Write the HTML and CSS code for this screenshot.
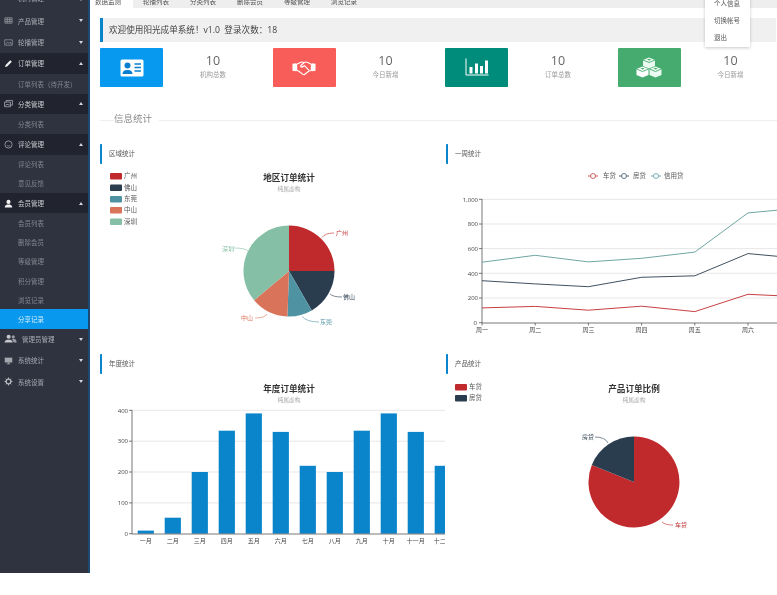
FILE: index.html
```
<!DOCTYPE html>
<html lang="zh-CN">
<head>
<meta charset="utf-8">
<title>阳光成单系统</title>
<link rel="stylesheet" href="styles.css">
</head>
<body>
<div class="app">
  <aside class="side">
    <div class="nav nav-cut"><span class="nav-label">机构管理</span><i class="caret"></i></div>
    <div class="nav"><svg class="ico" viewBox="0 0 10 10"><path d="M1 2h8v6H1zM1 4h8M1 6h8M3.6 2v6M6.4 2v6" fill="none" stroke="#9a9da6" stroke-width=".8"/></svg><span class="nav-label">产品管理</span><i class="caret"></i></div>
    <div class="nav"><svg class="ico" viewBox="0 0 10 10"><path d="M.8 2h8.4v6H.8zM2 7l2-2.4 1.6 1.5L7 4.6 8.2 7" fill="none" stroke="#9a9da6" stroke-width=".8"/></svg><span class="nav-label">轮播管理</span><i class="caret"></i></div>
    <div class="nav open"><svg class="ico" viewBox="0 0 10 10"><path d="M1.2 9l.6-2.4L7 1.4l1.7 1.7L3.5 8.3z" fill="#f2f2f2"/></svg><span class="nav-label">订单管理</span><i class="caret up"></i></div>
    <div class="sub">订单列表（待开发）</div>
    <div class="nav open"><svg class="ico" viewBox="0 0 10 10"><path d="M.6 3.4h6.6v5.2H.6zM2.4 3.2V1.6h7v5.2H7.4M1.5 7.6l1.8-2 1.4 1.2 1-.9 1 1.4" fill="none" stroke="#b5b7be" stroke-width=".8"/></svg><span class="nav-label">分类管理</span><i class="caret up"></i></div>
    <div class="sub">分类列表</div>
    <div class="nav open tall"><svg class="ico" viewBox="0 0 10 10"><circle cx="5" cy="5" r="4" fill="none" stroke="#b5b7be" stroke-width=".8"/><path d="M3.2 6.1c1.2.8 2.4.8 3.6 0" fill="none" stroke="#b5b7be" stroke-width=".7"/></svg><span class="nav-label">评论管理</span><i class="caret up"></i></div>
    <div class="sub sub-s">评论列表</div>
    <div class="sub sub-s">意见反馈</div>
    <div class="nav open tall"><svg class="ico" viewBox="0 0 10 10"><circle cx="5" cy="3.2" r="2.3" fill="#f0f0f0"/><path d="M.8 9.4c.2-2.4 2-2.6 3-3.2h2.4c1 .6 2.8.8 3 3.2z" fill="#f0f0f0"/></svg><span class="nav-label">会员管理</span><i class="caret up"></i></div>
    <div class="sub sub-s">会员列表</div>
    <div class="sub sub-s">删除会员</div>
    <div class="sub sub-s">等级管理</div>
    <div class="sub sub-s">积分管理</div>
    <div class="sub sub-s">浏览记录</div>
    <div class="sub sub-s active">分享记录</div>
    <div class="nav tall"><svg class="ico ico-w" viewBox="0 0 14 10"><circle cx="5" cy="2.8" r="2.2" fill="#c4c6cc"/><path d="M.6 9c.2-2.4 1.8-2.4 2.8-3h3.2c1 .6 2.600.6 2.800 3z" fill="#c4c6cc"/><circle cx="10" cy="3" r="1.7" fill="#9a9da6"/><path d="M8.6 5.4h2.8c1 .5 2 .6 2.2 3.6h-3.2z" fill="#9a9da6"/></svg><span class="nav-label">管理员管理</span><i class="caret"></i></div>
    <div class="nav"><svg class="ico" viewBox="0 0 10 10"><path d="M.8 1.8h8.4v5.4H.8z" fill="#a4a6ae"/><path d="M4 7.2h2v1.4h1.2v.6H2.8v-.6H4z" fill="#a4a6ae"/></svg><span class="nav-label">系统统计</span><i class="caret"></i></div>
    <div class="nav nav-last"><svg class="ico" viewBox="0 0 10 10"><circle cx="5" cy="5" r="2.6" fill="none" stroke="#b5b7be" stroke-width="1.5"/><path d="M5 .6v1.6M5 7.8v1.6M.6 5h1.6M7.8 5h1.6M1.9 1.900L3 3M7 7l1.100 1.100M1.900 8.100L3 7M7 3l1.100-1.100" stroke="#b5b7be" stroke-width="1.100"/></svg><span class="nav-label">系统设置</span><i class="caret"></i></div>
  </aside>

  <main class="main">
    <div class="tabs">
      <span class="tab tab-on">数据监测</span>
      <span class="tab">轮播列表</span>
      <span class="tab">分类列表</span>
      <span class="tab">删除会员</span>
      <span class="tab">等级管理</span>
      <span class="tab">浏览记录</span>
    </div>

    <div class="menu">
      <div class="menu-item">个人信息</div>
      <div class="menu-item">切换帐号</div>
      <div class="menu-item">退出</div>
    </div>

    <div class="content">
      <div class="welcome">欢迎使用阳光成单系统！v1.0 &nbsp;登录次数：18</div>

      <div class="cards">
        <div class="card">
          <div class="card-ico c-blue">
            <svg viewBox="0 0 24 18" class="glyph"><rect x=".5" y=".5" width="23" height="17" rx="1.500" fill="#fff"/><circle cx="7.500" cy="6.500" r="3" fill="#0a7fd0"/><path d="M2.500 15c.2-3.400 2.600-4 5-4s4.800.6 5 4z" fill="#0a7fd0"/><path d="M14.500 5h6.500M14.500 8.500h6.500M14.500 12h6.500" stroke="#0a7fd0" stroke-width="1.300"/></svg>
          </div>
          <div class="card-body"><div class="num">10</div><div class="lab">机构总数</div></div>
        </div>
        <div class="card">
          <div class="card-ico c-red">
            <svg viewBox="0 0 26 18" class="glyph"><path d="M.5 4.500l4-.6v8.600l-4-.6zM25.500 4.500l-4-.6v8.600l4-.6z" fill="#fff"/><path d="M5 5l4-2c1.500-.8 2.800-.6 4 .2 1.200-.8 2.500-1 4-.2l4 2v6.500l-3 1-4.500 3.500c-.6.400-1.200.300-1.700-.1L7.500 12.500 5 11.500z" fill="none" stroke="#fff" stroke-width="1.300"/><path d="M13 3.200L9.500 6.500c-.6 1 .6 2 1.800 1.300l2.200-1.300 5 5" fill="none" stroke="#fff" stroke-width="1.300"/></svg>
          </div>
          <div class="card-body"><div class="num">10</div><div class="lab">今日新增</div></div>
        </div>
        <div class="card">
          <div class="card-ico c-teal">
            <svg viewBox="0 0 24 18" class="glyph glyph-up"><path d="M1 .5V17h22.500" fill="none" stroke="#fff" stroke-width="1"/><path d="M4.500 9h3v6.500h-3zM10 5.500h3v10h-3zM15 8h3v7.500h-3zM20 2.500h3v13h-3z" fill="#fff"/></svg>
          </div>
          <div class="card-body"><div class="num">10</div><div class="lab">订单总数</div></div>
        </div>
        <div class="card">
          <div class="card-ico c-green">
            <svg viewBox="0 0 26 21" class="glyph glyph-cube"><path d="M13 .5l6 2.500v6l-6 2.500-6-2.500V3z" fill="#eafaf0"/><path d="M6.500 9.500l6 2.500v6l-6 2.500-6-2.500v-6z" fill="#fff"/><path d="M19.500 9.500l6 2.500v6l-6 2.500-6-2.500v-6z" fill="#eafaf0"/><path d="M7 3l6 2.500L19 3M.5 12l6 2.500 6-2.500M13.500 12l6 2.500 6-2.500" fill="none" stroke="#45ab6f" stroke-width=".9"/><path d="M11 2.600l2-.8 2.200.9-2 .8zM4.500 11.600l2-.8 2.200.9-2 .8zM17.500 11.600l2-.8 2.200.9-2 .8z" fill="#45ab6f"/></svg>
          </div>
          <div class="card-body"><div class="num">10</div><div class="lab">今日新增</div></div>
        </div>
      </div>

      <div class="legend-head"><span class="rule rule-s"></span><span class="legend-text">信息统计</span><span class="rule rule-g"></span></div>

      <div class="panels">
        <section class="panel">
          <h3 class="panel-title">区域统计</h3>
          <svg class="chart" viewBox="100 164 346 190" width="346" height="190">
            <g class="lg">
              <rect x="110" y="173" width="12" height="6.500" rx="1" fill="#c12a2c"/><text x="124" y="178.300">广州</text>
              <rect x="110" y="184.500" width="12" height="6.500" rx="1" fill="#2a3d4e"/><text x="124" y="189.800">佛山</text>
              <rect x="110" y="196" width="12" height="6.500" rx="1" fill="#4f93a3"/><text x="124" y="201.300">东莞</text>
              <rect x="110" y="207" width="12" height="6.500" rx="1" fill="#d9745a"/><text x="124" y="212.300">中山</text>
              <rect x="110" y="218.500" width="12" height="6.500" rx="1" fill="#85bfa5"/><text x="124" y="223.800">深圳</text>
            </g>
            <text class="ct" x="289" y="181">地区订单统计</text>
            <text class="cs" x="289" y="191">纯属虚构</text>
            <path d="M289 271V225.500A45.500 45.500 0 0 1 334.500 271z" fill="#c12a2c"/>
            <path d="M289 271H334.500A45.500 45.500 0 0 1 311.750 310.400z" fill="#2a3d4e"/>
            <path d="M289 271L311.750 310.400A45.500 45.500 0 0 1 287.410 316.470z" fill="#4f93a3"/>
            <path d="M289 271L287.410 316.470A45.500 45.500 0 0 1 254.150 300.250z" fill="#d9745a"/>
            <path d="M289 271L254.150 300.250A45.500 45.500 0 0 1 289 225.500z" fill="#85bfa5"/>
            <g class="lead">
              <path d="M322 237.500q3-4.500 12-4.500" stroke="#c12a2c"/><text x="336" y="235" fill="#c12a2c">广州</text>
              <path d="M330 294q3 3 12 3" stroke="#2a3d4e"/><text x="343" y="299.300" fill="#2a3d4e">佛山</text>
              <path d="M302 316.500q5 5.500 17 5.500" stroke="#4f93a3"/><text x="320" y="324.300" fill="#4f93a3">东莞</text>
              <path d="M267 314q-2 4-12 4" stroke="#d9745a"/><text x="241" y="320" fill="#d9745a">中山</text>
              <path d="M248 251q-3-3-14-3" stroke="#85bfa5"/><text x="222" y="250.500" fill="#85bfa5">深圳</text>
            </g>
          </svg>
        </section>

        <section class="panel">
          <h3 class="panel-title">一周统计</h3>
          <svg class="chart" viewBox="446 164 346 190" width="346" height="190">
            <g class="lg">
              <path d="M588 176h10" stroke="#c12a2c" stroke-width=".8"/><circle cx="593" cy="176" r="2.500" fill="#fff" stroke="#c12a2c" stroke-width=".7"/><text x="603" y="178.200">车贷</text>
              <path d="M619 176h10" stroke="#2a3d4e" stroke-width=".8"/><circle cx="624" cy="176" r="2.500" fill="#fff" stroke="#2a3d4e" stroke-width=".7"/><text x="633" y="178.200">房贷</text>
              <path d="M651 176h10" stroke="#4f93a3" stroke-width=".8"/><circle cx="656" cy="176" r="2.500" fill="#fff" stroke="#4f93a3" stroke-width=".7"/><text x="664" y="178.200">信用贷</text>
            </g>
            <path class="grid" d="M482 199.300H810M482 224H810M482 248.600H810M482 273.300H810M482 298H810"/>
            <path class="axis" d="M482 199v124H810M482 199.300h-3M482 224h-3M482 248.600h-3M482 273.300h-3M482 298h-3M482 322.700h-3M482 323v2.500M535.200 323v2.500M588.400 323v2.500M641.600 323v2.500M694.800 323v2.500M748 323v2.500"/>
            <g class="yl">
              <text x="478" y="201.500">1,000</text><text x="478" y="226.200">800</text><text x="478" y="250.800">600</text><text x="478" y="275.500">400</text><text x="478" y="300.200">200</text><text x="477" y="324.500">0</text>
            </g>
            <g class="xl">
              <text x="482" y="332">周一</text><text x="535.200" y="332">周二</text><text x="588.400" y="332">周三</text><text x="641.600" y="332">周四</text><text x="694.800" y="332">周五</text><text x="748" y="332">周六</text>
            </g>
            <polyline class="ln" stroke="#c12a2c" points="482,307.900 535.200,306.400 588.400,310.200 641.600,306.200 694.800,311.600 748,294.300 801.200,296.800"/>
            <polyline class="ln" stroke="#2a3d4e" points="482,280.700 535.200,283.900 588.400,286.700 641.600,277.300 694.800,275.800 748,253.600 801.200,258.500"/>
            <polyline class="ln" stroke="#5f9c96" points="482,262.200 535.200,255.300 588.400,261.900 641.600,258.300 694.800,252.100 748,212.900 801.200,208"/>
          </svg>
        </section>

        <section class="panel">
          <h3 class="panel-title">年度统计</h3>
          <svg class="chart" viewBox="100 374 345 190" width="345" height="190">
            <text class="ct" x="289" y="392">年度订单统计</text>
            <text class="cs" x="289" y="402">纯属虚构</text>
            <path class="grid" d="M132 410.300H445M132 441.200H445M132 472H445M132 502.900H445"/>
            <g fill="#0a85cc">
              <rect x="137.700" y="530.600" width="16.200" height="3.100"/>
              <rect x="164.700" y="517.700" width="16.200" height="16"/>
              <rect x="191.700" y="472" width="16.200" height="61.700"/>
              <rect x="218.700" y="430.700" width="16.200" height="103"/>
              <rect x="245.700" y="413.400" width="16.200" height="120.300"/>
              <rect x="272.700" y="431.900" width="16.200" height="101.800"/>
              <rect x="299.700" y="465.800" width="16.200" height="67.900"/>
              <rect x="326.700" y="472" width="16.200" height="61.700"/>
              <rect x="353.700" y="430.700" width="16.200" height="103"/>
              <rect x="380.700" y="413.400" width="16.200" height="120.300"/>
              <rect x="407.700" y="431.900" width="16.200" height="101.800"/>
              <rect x="434.700" y="465.800" width="16.200" height="67.900"/>
            </g>
            <path class="axis" d="M132 410v124H445M132 410.300h-3M132 441.200h-3M132 472h-3M132 502.900h-3M132 533.700h-3"/>
            <g class="yl">
              <text x="128" y="412.500">400</text><text x="128" y="443.400">300</text><text x="128" y="474.200">200</text><text x="128" y="505.100">100</text><text x="128" y="536">0</text>
            </g>
            <g class="xl">
              <text x="145.800" y="542.500">一月</text><text x="172.800" y="542.500">二月</text><text x="199.800" y="542.500">三月</text><text x="226.800" y="542.500">四月</text><text x="253.800" y="542.500">五月</text><text x="280.800" y="542.500">六月</text><text x="307.800" y="542.500">七月</text><text x="334.800" y="542.500">八月</text><text x="361.800" y="542.500">九月</text><text x="388.800" y="542.500">十月</text><text x="415.800" y="542.500">十一月</text><text x="442.800" y="542.500">十二月</text>
            </g>
          </svg>
        </section>

        <section class="panel">
          <h3 class="panel-title">产品统计</h3>
          <svg class="chart" viewBox="446 374 346 190" width="346" height="190">
            <g class="lg">
              <rect x="455" y="384" width="12" height="6.500" rx="1" fill="#c12a2c"/><text x="469" y="389.300">车贷</text>
              <rect x="455" y="395" width="12" height="6.500" rx="1" fill="#2a3d4e"/><text x="469" y="400.300">房贷</text>
            </g>
            <text class="ct" x="634" y="392">产品订单比例</text>
            <text class="cs" x="634" y="402">纯属虚构</text>
            <path d="M634 482V436.500A45.500 45.500 0 1 1 591.800 464.900z" fill="#c12a2c"/>
            <path d="M634 482L591.800 464.900A45.500 45.500 0 0 1 634 436.500z" fill="#2a3d4e"/>
            <g class="lead">
              <path d="M608 443q-3-6-13-6" stroke="#2a3d4e"/><text x="582" y="439.200" fill="#2a3d4e">房贷</text>
              <path d="M662 522q3 3 11 3" stroke="#c12a2c"/><text x="675" y="527.200" fill="#c12a2c">车贷</text>
            </g>
          </svg>
        </section>
      </div>
    </div>
  </main>
</div>
</body>
</html>
```

FILE: styles.css
```
* { box-sizing: border-box; }
html, body { margin: 0; padding: 0; background: #fff; overflow: hidden; }
body { font-family: "Open Sans", "Noto Sans CJK SC", sans-serif; }

.app { display: flex; width: 777px; height: 573px; filter: blur(.3px); }

.side { flex: 0 0 90px; height: 573px; background: #2f323f; border-right: 2px solid #1d4a70; overflow: hidden; display: flex; flex-direction: column; color: #a9abb3; font-size: 6.5px; }
.nav { height: 21.5px; flex: none; display: flex; align-items: center; padding-left: 4px; padding-right: 5px; }
.nav-cut { height: 10px; align-items: flex-start; }
.nav-cut .nav-label { margin: -7px 0 0 14px; }
.nav-cut .caret { margin-top: -2px; }
.nav.tall { height: 21px; }
.nav.open { background: #21232e; color: #c9cad0; height: 20.5px; }
.nav-label { flex: 1; margin-left: 5px; white-space: nowrap; }
.ico { width: 9px; height: 9px; flex: none; }
.ico-w { width: 13px; height: 9.500px; margin-right: 0; }
.caret { width: 0; height: 0; border-left: 2.500px solid transparent; border-right: 2.500px solid transparent; border-top: 3px solid #d6d7dc; flex: none; }
.caret.up { border-top: 0; border-bottom: 3px solid #d6d7dc; }
.sub { height: 20px; flex: none; display: flex; align-items: center; padding-left: 18px; color: #83868f; white-space: nowrap; }
.sub-s { height: 19.200px; }
.sub.active { background: #0899ee; color: #d6ecf9; }

.main { flex: 1; min-width: 0; position: relative; overflow: hidden; background: #fff; }

.tabs { height: 8px; background: #eeeeee; display: flex; align-items: flex-end; overflow: hidden; font-size: 6.500px; color: #555; }
.tab { flex: 0 0 47px; height: 8px; line-height: 3px; padding-left: 6px; white-space: nowrap; }
.tab-on { flex-basis: 43px; background: #fff; padding-left: 5px; margin-right: 4px; }

.menu { position: absolute; left: 615px; top: -6px; width: 45px; height: 53px; padding-top: 1px; background: #fff; box-shadow: 0 1px 3px rgba(0,0,0,.22); font-size: 6.500px; color: #555; z-index: 5; }
.menu-item { height: 17px; line-height: 17px; padding-left: 9px; white-space: nowrap; }

.content { width: 700px; padding: 10px 0 0 10px; }
.welcome { height: 24px; width: 676px; line-height: 24px; padding-left: 6px; background: #f0f0f0; border-left: 3px solid #0a85cc; font-size: 8.600px; color: #444; white-space: nowrap; }

.cards { margin-top: 6px; display: grid; grid-template-columns: repeat(4, 163px); column-gap: 9.500px; }
.card { height: 39px; display: flex; }
.card-ico { width: 63px; flex: none; border-radius: 1px; display: flex; align-items: center; justify-content: center; }
.c-blue { background: #0798f0; }
.c-red { background: #f95d5a; }
.c-teal { background: #008c7a; }
.c-green { background: #45ab6f; }
.glyph { width: 24px; height: 18px; display: block; }
.glyph-up { transform: translateY(-1px); }
.glyph-cube { width: 26px; height: 21px; }
.card-body { flex: 1; text-align: center; padding-top: 5px; }
.num { font-size: 12.500px; line-height: 15px; color: #666; }
.lab { font-size: 6.500px; line-height: 12px; color: #999; margin-top: 1px; }

.legend-head { margin-top: 24px; height: 14px; display: flex; align-items: center; width: 680px; }
.rule { height: 1px; background: #eeeeee; display: block; margin-top: 5px; }
.rule-s { width: 14px; }
.rule-g { flex: 1; margin-left: 7px; }
.legend-text { font-size: 9.500px; color: #8a8a8a; white-space: nowrap; }

.panels { margin-top: 19px; display: grid; grid-template-columns: 346px 346px; }
.panel { height: 210px; min-width: 0; }
.panel-title { margin: 0; height: 20px; line-height: 20px; padding-left: 7px; border-left: 2.500px solid #0a85cc; font-size: 6.500px; font-weight: 400; color: #555; border-radius: 1px; }
.chart { display: block; font-family: "Noto Sans CJK SC", "Open Sans", sans-serif; }

.lg text { font-size: 6.500px; fill: #555; }
.ct { font-size: 8.600px; font-weight: 700; fill: #333; text-anchor: middle; }
.cs { font-size: 5.800px; fill: #aaa; text-anchor: middle; }
.lead path { fill: none; stroke-width: .6; }
.lead text { font-size: 6px; }
.grid { fill: none; stroke: #dddddd; stroke-width: .7; }
.axis { fill: none; stroke: #555; stroke-width: .8; }
.yl text { font-size: 6px; fill: #444; text-anchor: end; font-family: "Open Sans", sans-serif; }
.xl text { font-size: 6px; fill: #444; text-anchor: middle; }
.ln { fill: none; stroke-width: .9; }
```
